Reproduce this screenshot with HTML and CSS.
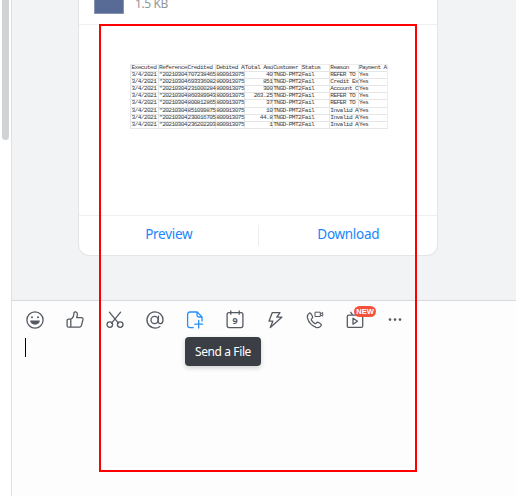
FILE: index.html
```html
<!DOCTYPE html>
<html lang="en">
<head>
<meta charset="utf-8">
<title>Chat</title>
<link rel="stylesheet" href="styles.css">
</head>
<body>
<div class="app">
  <aside class="rail"><div class="thumb"></div></aside>
  <main class="chat">
    <section class="messages">
      <article class="card">
        <header class="file-head"><div class="file-icon"></div><span class="file-size">1.5 KB</span></header>
        <div class="preview">
          <table class="sheet">
            <tr><td>Executed</td><td>Reference</td><td>Credited</td><td>Debited A</td><td>Total Amo</td><td>Customer</td><td>Status</td><td>Reason</td><td>Payment A</td></tr>
            <tr><td>3/4/2021</td><td>"20210304</td><td>707238465</td><td>800913075</td><td class="num">40</td><td>TNGD-PMT2</td><td>Fail</td><td>REFER TO</td><td>Yes</td></tr>
            <tr><td>3/4/2021</td><td>"20210304</td><td>693336082</td><td>800913075</td><td class="num">851</td><td>TNGD-PMT2</td><td>Fail</td><td>Credit Ex</td><td>Yes</td></tr>
            <tr><td>3/4/2021</td><td>"20210304</td><td>231000284</td><td>800913075</td><td class="num">300</td><td>TNGD-PMT2</td><td>Fail</td><td>Account C</td><td>Yes</td></tr>
            <tr><td>3/4/2021</td><td>"20210304</td><td>860389943</td><td>800913075</td><td class="num">263.25</td><td>TNGD-PMT2</td><td>Fail</td><td>REFER TO</td><td>Yes</td></tr>
            <tr><td>3/4/2021</td><td>"20210304</td><td>800812865</td><td>800913075</td><td class="num">37</td><td>TNGD-PMT2</td><td>Fail</td><td>REFER TO</td><td>Yes</td></tr>
            <tr><td>3/4/2021</td><td>"20210304</td><td>851099875</td><td>800913075</td><td class="num">10</td><td>TNGD-PMT2</td><td>Fail</td><td>Invalid A</td><td>Yes</td></tr>
            <tr><td>3/4/2021</td><td>"20210304</td><td>230016705</td><td>800913075</td><td class="num">44.8</td><td>TNGD-PMT2</td><td>Fail</td><td>Invalid A</td><td>Yes</td></tr>
            <tr><td>3/4/2021</td><td>"20210304</td><td>236202203</td><td>800913075</td><td class="num">1</td><td>TNGD-PMT2</td><td>Fail</td><td>Invalid A</td><td>Yes</td></tr>
          </table>
        </div>
        <footer class="actions"><a class="action">Preview</a><i class="divider"></i><a class="action">Download</a></footer>
      </article>
    </section>
    <section class="composer">
      <div class="toolbar">
        <span class="tool"><svg viewBox="0 0 20 20"><circle cx="10" cy="10" r="8.1"/><circle class="solid" cx="7" cy="7.3" r="1"/><circle class="solid" cx="13" cy="7.3" r="1"/><path class="solid" d="M5.2 10.6h9.6c0 5.4-9.6 5.4-9.6 0z"/></svg></span>
        <span class="tool"><svg viewBox="0 0 20 20"><path d="M5.8 9.2C8 8 8.9 5.7 8.9 3.2c0-2 3.5-1.6 3.5 1.1 0 1.3-.4 2.4-.7 3.3h4.7c1.4 0 1.8 1.1 1.5 2.2l-1.5 5.8c-.3 1-.9 1.6-2 1.6H5.800zM5.8 9.2H3.6c-1 0-1.5.5-1.5 1.5v5c0 1 .5 1.5 1.5 1.5h2.2"/></svg></span>
        <span class="tool"><svg viewBox="0 0 20 20"><path d="M4.4 2.2l9 11M15.6 2.2l-9 11"/><circle cx="4.8" cy="14.6" r="2.8"/><circle cx="15.2" cy="14.6" r="2.8"/></svg></span>
        <span class="tool"><svg viewBox="0 0 20 20"><circle cx="9.6" cy="10" r="3.6"/><path d="M13.5 6.2l-.4 5.3c-.1 2.8 4.9 3.2 4.9-1.6 0-4.5-3.3-8-8-8a8.1 8.1 0 1 0 4.9 14.6"/></svg></span>
        <span class="tool active"><svg viewBox="0 0 20 20"><path d="M8.3 17.6H5c-1.5 0-2.4-.9-2.4-2.4V4.4C2.6 2.9 3.5 2 5 2h7.2L17 6.9v4.2M12 2v3.2c0 1.2.6 1.8 1.8 1.8H17M13.700 10.500v7.500M9.900 14.200h7.600"/></svg>
          <span class="tooltip">Send a File</span></span>
        <span class="tool"><svg viewBox="0 0 20 20"><path d="M4 2.7h12c1 0 1.9.8 1.9 1.9v11c0 1.2-.8 2-1.9 2H4c-1.1 0-1.9-.8-1.9-2v-11c0-1.1.9-1.900 1.9-1.900zM5.8 1v3.2M14.2 1v3.2"/></svg><b class="day">9</b></span>
        <span class="tool"><svg viewBox="0 0 20 20"><path d="M7.300 2.600h7.700l-3.200 4.600h5L5.300 17.500l2.500-6.300H4z"/></svg></span>
        <span class="tool"><svg viewBox="0 0 20 20"><path d="M4.3 3.2c-1.9 1.3-2.4 2.8-1.7 5.2 1.1 3.9 4.4 7.5 8.4 8.9 2.4.7 4.2.1 5.2-1.8.5-.9-.2-1.5-1-2l-1.7-1c-1-.6-1.6-.2-2.2.6-.5.6-1 .7-1.700.3-1.400-.8-2.500-2-3.200-3.400-.3-.7-.1-1.100.5-1.500.8-.6 1-1.300.5-2.200l-1-1.800c-.5-1-1.100-1.900-2.100-1.300z"/><path class="fine" d="M10.400 2.200h4.900v4.300h-4.900zM15.300 4l2.400-1.500v3.700L15.300 4.800"/></svg></span>
        <span class="tool"><svg viewBox="0 0 20 20"><path d="M3.800 5.100h12.400c1 0 1.500.5 1.500 1.500v9.300c0 1-.5 1.500-1.500 1.500H3.800c-1 0-1.500-.5-1.500-1.500V6.600c0-1 .5-1.500 1.500-1.500zM5.800 2.300l1.700 2.500M8 8.200l4.500 3L8 14.200z"/></svg><span class="badge">NEW</span></span>
        <span class="tool"><svg viewBox="0 0 20 20"><circle class="solid" cx="5" cy="9.600" r="1.300"/><circle class="solid" cx="10" cy="9.600" r="1.300"/><circle class="solid" cx="15" cy="9.600" r="1.300"/></svg></span>
      </div>
      <div class="input"><i class="caret"></i></div>
    </section>
  </main>
</div>
<div class="highlight"></div>
</body>
</html>
```

FILE: styles.css
```css
* { box-sizing: border-box; }
body { margin: 0; background: #fff; font-family: "Noto Sans", "Open Sans", sans-serif; overflow: hidden; }
.app { display: flex; width: 516px; height: 496px; }
.rail { width: 11px; flex: none; padding-left: 2px; }
.thumb { width: 7px; height: 140px; background: #d2d3d5; border-radius: 0 0 4px 4px; }
.chat { flex: 1; display: flex; flex-direction: column; border-left: 1px solid #dfe0e3; min-width: 0; }
.messages { height: 300px; background: #f2f3f5; padding-left: 66px; flex: none; }
.card { width: 360px; height: 256px; background: #fff; border: 1px solid #e3e5e8; border-top: 0; border-radius: 0 0 11px 11px; }
.file-head { height: 25px; border-bottom: 1px solid #eeeff1; display: flex; padding-left: 15px; }
.file-icon { width: 30px; height: 14px; background: #586b96; border: 1px solid #8794b3; border-top: 0; border-radius: 0 0 1px 1px; }
.file-size { margin: -5px 0 0 11px; font-size: 12px; line-height: 17px; letter-spacing: -.4px; color: #92959b; }
.preview { height: 190px; padding: 39px 0 0 50.5px; }
.sheet { width: 258px; table-layout: fixed; border-collapse: separate; border-spacing: 0; border-right: 1px solid #ececec; border-top: 1px solid #ececec; font: 6.2px/6.1px "Liberation Mono", monospace; letter-spacing: -.62px; color: #3c3c3c; }
.sheet td { height: 7.1px; padding: 0; border-left: 1px solid #e5e5e5; border-bottom: 1px solid #e5e5e5; white-space: nowrap; }
.sheet td:first-child { padding-left: 1px; }
.sheet .num { text-align: right; }
.actions { height: 40px; border-top: 1px solid #eeeff1; display: flex; align-items: center; }
.action { flex: 1; text-align: center; font-size: 13.5px; line-height: 20px; color: #1a86fa; letter-spacing: -.3px; padding: 0 0 3px 1px; }
.divider { width: 1px; height: 21px; background: #eceef0; }
.composer { flex: 1; background: #fdfdfd; border-top: 1px solid #d9dadd; }
.toolbar { display: flex; gap: 20px; padding: 9px 0 0 13px; }
.tool { position: relative; width: 20px; height: 20px; flex: none; color: #555961; }
.tool svg { display: block; width: 20px; height: 20px; fill: none; stroke: currentColor; stroke-width: 1.3; stroke-linecap: round; stroke-linejoin: round; }
.tool .solid { fill: currentColor; stroke: none; }
.tool .fine { stroke-width: 1; }
.tool.active { color: #2590fa; }
.day { position: absolute; left: 0; top: 4px; width: 20px; text-align: center; font-size: 9px; line-height: 14px; }
.badge { position: absolute; left: 9px; top: -4px; width: 22px; height: 11px; border-radius: 6px; background: #f4523b; color: #fff; font: bold 7.5px/11px "Liberation Sans", sans-serif; text-align: center; }
.tooltip { position: absolute; left: 0; top: 27px; width: 76px; height: 29px; border-radius: 4px; background: #3b3e45; color: #fff; font-size: 12px; line-height: 29px; letter-spacing: -.4px; text-align: center; white-space: nowrap; box-shadow: 0 2px 5px rgba(0,0,0,.18); }
.input { padding: 8px 0 0 13px; }
.caret { display: block; width: 1px; height: 19px; background: #000; }
.highlight { position: absolute; left: 99px; top: 24px; width: 318px; height: 448px; border: 2px solid #f00; }
```
